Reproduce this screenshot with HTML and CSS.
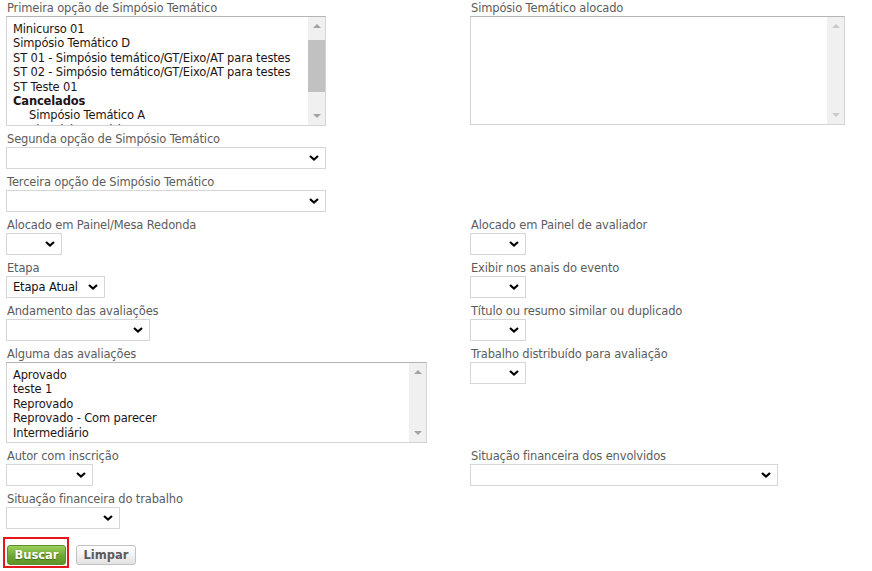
FILE: index.html
```html
<!DOCTYPE html>
<html lang="pt-BR">
<head>
  <meta charset="UTF-8" />
  <title>Filtrar trabalhos</title>
  <link rel="stylesheet" href="styles.css">
</head>
<body>
  <form class="filtros">
    <div class="grade">
      <div class="campo">
        <label>Primeira opção de Simpósio Temático</label>
        <div class="lista lista-st">
          <div class="opcoes">
            <div>Minicurso 01</div>
            <div>Simpósio Temático D</div>
            <div>ST 01 - Simpósio temático/GT/Eixo/AT para testes</div>
            <div>ST 02 - Simpósio temático/GT/Eixo/AT para testes</div>
            <div>ST Teste 01</div>
            <div class="grupo">Cancelados</div>
            <div class="sub">Simpósio Temático A</div>
            <div class="sub">Simpósio Temático B</div>
          </div>
          <div class="rolagem">
            <span class="seta cima"></span>
            <span class="trilho"><span class="barra"></span></span>
            <span class="seta baixo"></span>
          </div>
        </div>
      </div>
      <div class="campo">
        <label>Simpósio Temático alocado</label>
        <div class="lista lista-alocado">
          <div class="opcoes"></div>
          <div class="rolagem inativa">
            <span class="seta cima"></span>
            <span class="trilho"></span>
            <span class="seta baixo"></span>
          </div>
        </div>
      </div>

      <div class="campo">
        <label>Segunda opção de Simpósio Temático</label>
        <div class="select w320"><span></span><svg viewBox="0 0 10 6"><path d="M1 1l4 3.5L9 1"/></svg></div>
      </div>
      <div></div>

      <div class="campo">
        <label>Terceira opção de Simpósio Temático</label>
        <div class="select w320"><span></span><svg viewBox="0 0 10 6"><path d="M1 1l4 3.5L9 1"/></svg></div>
      </div>
      <div></div>

      <div class="campo">
        <label>Alocado em Painel/Mesa Redonda</label>
        <div class="select w56"><span></span><svg viewBox="0 0 10 6"><path d="M1 1l4 3.5L9 1"/></svg></div>
      </div>
      <div class="campo">
        <label>Alocado em Painel de avaliador</label>
        <div class="select w56"><span></span><svg viewBox="0 0 10 6"><path d="M1 1l4 3.5L9 1"/></svg></div>
      </div>

      <div class="campo">
        <label>Etapa</label>
        <div class="select w99"><span>Etapa Atual</span><svg viewBox="0 0 10 6"><path d="M1 1l4 3.5L9 1"/></svg></div>
      </div>
      <div class="campo">
        <label>Exibir nos anais do evento</label>
        <div class="select w56"><span></span><svg viewBox="0 0 10 6"><path d="M1 1l4 3.5L9 1"/></svg></div>
      </div>

      <div class="campo">
        <label>Andamento das avaliações</label>
        <div class="select w144"><span></span><svg viewBox="0 0 10 6"><path d="M1 1l4 3.5L9 1"/></svg></div>
      </div>
      <div class="campo">
        <label>Título ou resumo similar ou duplicado</label>
        <div class="select w56"><span></span><svg viewBox="0 0 10 6"><path d="M1 1l4 3.5L9 1"/></svg></div>
      </div>

      <div class="campo">
        <label>Alguma das avaliações</label>
        <div class="lista lista-avaliacoes">
          <div class="opcoes">
            <div>Aprovado</div>
            <div>teste 1</div>
            <div>Reprovado</div>
            <div>Reprovado - Com parecer</div>
            <div>Intermediário</div>
          </div>
          <div class="rolagem">
            <span class="seta cima"></span>
            <span class="trilho"></span>
            <span class="seta baixo"></span>
          </div>
        </div>
      </div>
      <div class="campo">
        <label>Trabalho distribuído para avaliação</label>
        <div class="select w56"><span></span><svg viewBox="0 0 10 6"><path d="M1 1l4 3.5L9 1"/></svg></div>
      </div>

      <div class="campo">
        <label>Autor com inscrição</label>
        <div class="select w87"><span></span><svg viewBox="0 0 10 6"><path d="M1 1l4 3.5L9 1"/></svg></div>
      </div>
      <div class="campo">
        <label>Situação financeira dos envolvidos</label>
        <div class="select w308"><span></span><svg viewBox="0 0 10 6"><path d="M1 1l4 3.5L9 1"/></svg></div>
      </div>

      <div class="campo">
        <label>Situação financeira do trabalho</label>
        <div class="select w114"><span></span><svg viewBox="0 0 10 6"><path d="M1 1l4 3.5L9 1"/></svg></div>
      </div>
      <div></div>
    </div>

    <div class="acoes">
      <span class="destaque"><button type="button" class="btn btn-buscar">Buscar</button></span>
      <button type="reset" class="btn btn-limpar">Limpar</button>
    </div>
  </form>
</body>
</html>
```

FILE: styles.css
```css
body {
  margin: 0;
  padding: 0 0 0 6px;
  background: #fff;
  font-family: "DejaVu Sans", Verdana, sans-serif;
  font-size: 11.5px;
  letter-spacing: -0.15px;
  color: #222;
}

.grade {
  display: grid;
  grid-template-columns: 464px 1fr;
  align-items: start;
}

.campo {
  margin-bottom: 5px;
}

.campo label {
  display: block;
  height: 16px;
  line-height: 16px;
  padding-left: 1px;
  color: #5c5c5c;
  white-space: nowrap;
}

/* caixas de listagem multipla */
.lista {
  display: flex;
  box-sizing: border-box;
  border: 1px solid #d4d4d4;
  border-top-color: #b4b4b4;
  background: #fff;
  overflow: hidden;
}

.lista-st { width: 320px; height: 110px; }
.lista-alocado { width: 375px; height: 109px; }
.lista-avaliacoes { width: 421px; height: 81px; }

.opcoes {
  flex: 1;
  padding: 5px 6px 0;
  line-height: 14.4px;
  white-space: nowrap;
  overflow: hidden;
  color: #1e1414;
}

.opcoes .grupo { font-weight: bold; }
.opcoes .sub { padding-left: 16px; }

.rolagem {
  width: 17px;
  background: #f0f0f0;
  display: flex;
  flex-direction: column;
  align-items: center;
}

.trilho {
  flex: 1;
  width: 100%;
  padding-top: 5px;
}

.barra {
  display: block;
  height: 52px;
  background: #c1c1c1;
}

.seta {
  width: 0;
  height: 0;
  border-left: 4px solid transparent;
  border-right: 4px solid transparent;
  margin: 7px 0;
}

.seta.cima { border-bottom: 4px solid #a3a3a3; }
.seta.baixo { border-top: 4px solid #a3a3a3; }
.inativa .seta.cima { border-bottom-color: #c9c9c9; }
.inativa .seta.baixo { border-top-color: #c9c9c9; }

/* selects */
.select {
  box-sizing: border-box;
  height: 22px;
  border: 1px solid #d6d6d6;
  background: #fff;
  display: flex;
  align-items: center;
  padding: 0 6px 0 6px;
  color: #111;
}

.select span {
  flex: 1;
  white-space: nowrap;
}

.select svg {
  width: 10px;
  height: 6px;
  fill: none;
  stroke: #000;
  stroke-width: 2.2;
}

.w56 { width: 56px; }
.w87 { width: 87px; }
.w99 { width: 99px; }
.w114 { width: 114px; }
.w144 { width: 144px; }
.w308 { width: 308px; }
.w320 { width: 320px; }

/* botoes */
.acoes {
  display: flex;
  align-items: flex-end;
  gap: 7px;
  margin: 3px 0 0 -3px;
}

.destaque {
  display: inline-block;
  border: 2px solid #e8151d;
  padding: 6px 1px 1px 2px;
}

.btn {
  box-sizing: border-box;
  height: 20px;
  padding: 0;
  border-radius: 3px;
  font-family: "DejaVu Sans", Verdana, sans-serif;
  font-size: 11.5px;
  font-weight: bold;
  cursor: pointer;
}

.btn-buscar {
  width: 59px;
  color: #fff;
  border: 1px solid #5f8f2c;
  background: linear-gradient(#9ccf5c, #6ea632 55%, #5e9526);
  text-shadow: 0 1px 1px #3d6a17;
}

.btn-limpar {
  width: 60px;
  margin-bottom: 3px;
  color: #5a5a5a;
  border: 1px solid #c2c2c2;
  background: linear-gradient(#ffffff, #f2f2f2 50%, #e2e2e2);
}
```
